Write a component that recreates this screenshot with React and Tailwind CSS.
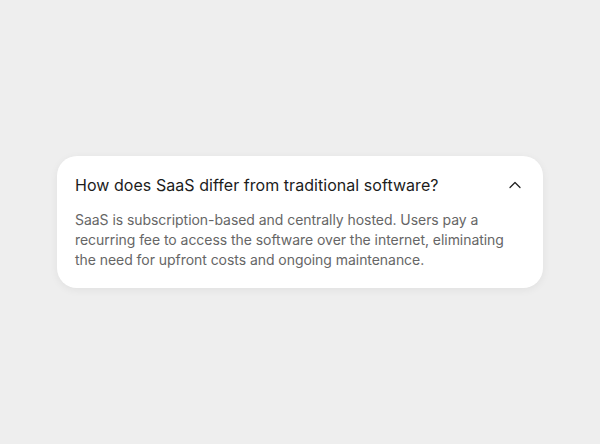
import React from 'react';
import { ChevronUp } from 'lucide-react';

const App = () => {
  return (
    <div className="min-h-[444px] w-full bg-[#eeeeee] flex items-center justify-center" style={{ fontFamily: 'Inter, "Liberation Sans", sans-serif' }}>
      <div className="w-[486px] bg-white rounded-[20px] shadow-[0_2px_8px_rgba(0,0,0,0.06)] px-[18px] pt-[17px] pb-[18px]">
        <div className="flex items-center justify-between">
          <h3 className="text-[16px] leading-6 text-[#1c1c1c] font-normal tracking-[0.05px]">
            How does SaaS differ from traditional software?
          </h3>
          <ChevronUp className="w-[20px] h-[20px] text-[#222]" strokeWidth={1.5} />
        </div>
        <p className="mt-[13px] text-[14px] leading-5 text-[#666666] tracking-[-0.05px]">
          SaaS is subscription-based and centrally hosted. Users pay a recurring fee to access the software over the internet, eliminating the need for upfront costs and ongoing maintenance.
        </p>
      </div>
    </div>
  );
};

export default App;
